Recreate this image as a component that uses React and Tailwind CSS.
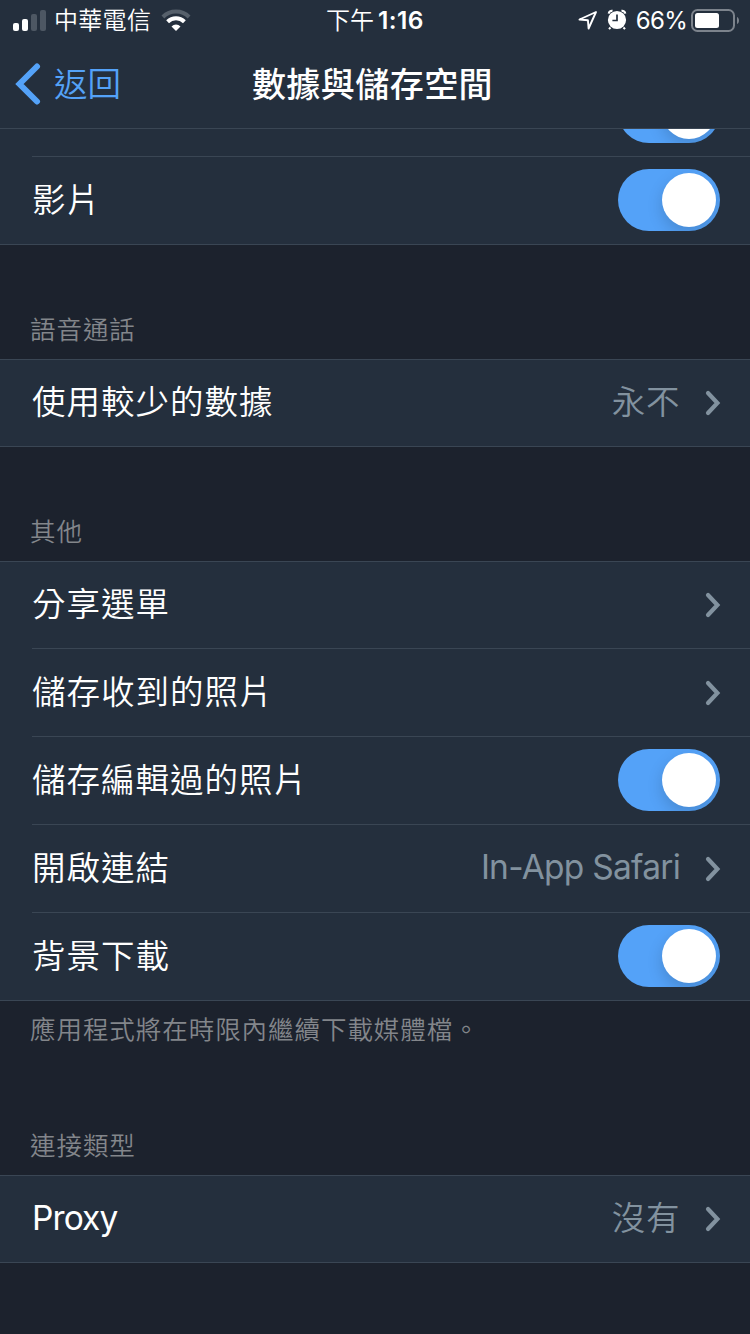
import React from "react";

const latin = "font-['Inter','Noto_Sans_CJK_TC',sans-serif]";

function Chevron() {
  return (
    <svg className="-mr-px ml-[25px] h-[26px] w-4 shrink-0" viewBox="0 0 16 26" fill="none" stroke="#82929f" strokeWidth="4.2" strokeLinecap="round" strokeLinejoin="miter">
      <path d="M3 3 L12.4 13 L3 23" />
    </svg>
  );
}

function Toggle({ className = "" }) {
  return (
    <div className={`flex h-[62px] w-[102px] shrink-0 justify-end overflow-hidden rounded-full bg-[#54a2f8] p-1 ${className}`}>
      <div className="size-[54px] rounded-full bg-white shadow-[0_6px_16px_rgba(0,0,0,0.16)]" />
    </div>
  );
}

function Row({ label, value, toggle, last, first, labelClass = "", valueClass = "" }) {
  const height = first ? "h-[87px]" : "h-[88px]";
  return (
    <div className={`${height} pl-8`}>
      <div className={`flex h-full items-center border-b border-[#3a4654] pr-[30px] ${last ? "-ml-8 pl-8" : ""}`}>
        <div className={`flex-1 whitespace-nowrap pb-1.5 text-[33.5px] font-[350] leading-[48px] tracking-[1px] text-white ${labelClass}`}>
          {label}
        </div>
        {value && (
          <div className={`whitespace-nowrap pb-1.5 text-[33.5px] font-[350] leading-[48px] tracking-[0.6px] text-[#82929f] ${valueClass}`}>
            {value}
          </div>
        )}
        {toggle ? <Toggle className="-mt-0.5" /> : <Chevron />}
      </div>
    </div>
  );
}

function Group({ children }) {
  return <section className="border-t border-[#3a4654] bg-[#242f3d]">{children}</section>;
}

function Caption({ children, className }) {
  return (
    <div className={`pl-[30px] text-[25.5px] font-[350] leading-[38px] tracking-[0.95px] text-[#83868b] ${className}`}>
      {children}
    </div>
  );
}

function Signal() {
  return (
    <div className="flex h-[21px] items-end gap-[3px]">
      <div className="h-2 w-1.5 rounded-[2px] bg-white" />
      <div className="h-3 w-1.5 rounded-[2px] bg-white" />
      <div className="h-[17px] w-1.5 rounded-[2px] bg-[#4d5763]" />
      <div className="h-[21px] w-1.5 rounded-[2px] bg-[#4d5763]" />
    </div>
  );
}

function Wifi() {
  return (
    <svg className="ml-2.5 h-[22px] w-[30px]" viewBox="0 0 30 22" fill="none">
      <path d="M1.9 8 A18.6 18.6 0 0 1 28.1 8" stroke="#56606b" strokeWidth="4" />
      <path d="M6.6 12.8 A12 12 0 0 1 23.4 12.8" stroke="#fff" strokeWidth="4" />
      <path d="M15 22 L10.5 17.4 A6.4 6.4 0 0 1 19.5 17.4 Z" fill="#fff" />
    </svg>
  );
}

function StatusBar() {
  return (
    <div className="grid h-10 grid-cols-[1fr_auto_1fr] items-center text-white">
      <div className="flex items-center pl-[13px]">
        <Signal />
        <span className="ml-2 pb-0.5 text-[24px] font-[350] leading-9 tracking-[0.3px]">中華電信</span>
        <Wifi />
      </div>
      <div className="flex items-center text-[24px] leading-9">
        <span className="pb-0.5 font-[350]">下午</span>
        <span className={`${latin} ml-1 text-[24.5px] font-semibold tracking-[0.4px]`}>1:16</span>
      </div>
      <div className="flex items-center justify-end pr-2.5">
        <svg className="h-5 w-5" viewBox="0 0 20 20" fill="none" stroke="#fff" strokeWidth="1.9" strokeLinejoin="round">
          <path d="M18 2 L1.5 9.5 L9.9 10.2 L10.6 18.5 Z" />
        </svg>
        <svg className="ml-[9px] h-[22px] w-[20px]" viewBox="0 0 20 22" fill="none">
          <circle cx="10" cy="11" r="9.1" fill="#fff" />
          <path d="M1.8 4.6 A3 3 0 0 1 5.5 1.9 M14.5 1.9 A3 3 0 0 1 18.2 4.6" stroke="#fff" strokeWidth="2.2" />
          <path d="M3.5 18.5 L2 20.2 M16.5 18.5 L18 20.2" stroke="#fff" strokeWidth="2" />
          <path d="M10 5.5 V11.5 H5.4" stroke="#242f3d" strokeWidth="1.7" />
        </svg>
        <span className={`${latin} ml-[9px] pt-px text-[24px] leading-9 tracking-[-0.7px]`}>66%</span>
        <svg className="ml-1 h-[23px] w-[49px]" viewBox="0 0 49 23" fill="none">
          <rect x="1" y="1" width="42" height="21" rx="5.5" stroke="#7c838c" strokeWidth="2" />
          <rect x="4" y="4" width="24" height="15" rx="2.5" fill="#fff" />
          <path d="M46 8 C48.7 9 48.7 14 46 15 Z" fill="#7c838c" />
        </svg>
      </div>
    </div>
  );
}

export default function App() {
  return (
    <div lang="zh-Hant" className="flex h-[1334px] w-[750px] flex-col overflow-hidden bg-[#1c222d] font-['Noto_Sans_CJK_TC',sans-serif]">
      <header className="h-[129px] border-b border-[#3a4654] bg-[#242f3d]">
        <StatusBar />
        <div className="grid h-[88px] grid-cols-[1fr_auto_1fr] items-center">
          <div className="flex items-center pl-[15px] text-[#54a2f8]">
            <svg className="h-[44px] w-[26px]" viewBox="0 0 26 44" fill="none" stroke="currentColor" strokeWidth="6" strokeLinecap="round">
              <path d="M22 4.5 L4.5 22 L22 39.5" />
            </svg>
            <span className="ml-[13px] pb-[5px] text-[33.5px] font-[350] leading-[48px]">返回</span>
          </div>
          <h1 className="mr-[5px] pb-0.5 text-[34px] font-medium leading-[48px] tracking-[0.45px] text-white">數據與儲存空間</h1>
        </div>
      </header>
      <div className="flex h-7 items-end justify-end overflow-hidden bg-[#242f3d] pl-8">
        <div className="flex h-full flex-1 items-end justify-end border-b border-[#3a4654] pb-[13px] pr-[30px]">
          <Toggle />
        </div>
      </div>
      <section className="bg-[#242f3d]">
        <Row label="影片" toggle last />
      </section>

      <Caption className="h-[114px] pt-16">語音通話</Caption>
      <Group>
        <Row label="使用較少的數據" value="永不" first last />
      </Group>

      <Caption className="h-[114px] pt-16">其他</Caption>
      <Group>
        <Row label="分享選單" first />
        <Row label="儲存收到的照片" />
        <Row label="儲存編輯過的照片" toggle />
        <Row label="開啟連結" value="In-App Safari" valueClass="font-['Inter',sans-serif] pb-[3px]! font-normal! tracking-[-0.75px]!" />
        <Row label="背景下載" toggle last />
      </Group>

      <Caption className="h-[115px] pt-2">應用程式將在時限內繼續下載媒體檔。</Caption>
      <Caption className="h-[59px] pt-[9px]">連接類型</Caption>
      <Group>
        <Row label="Proxy" labelClass="font-['Inter',sans-serif] pb-[3px]! font-normal! tracking-[-0.9px]!" value="沒有" first last />
      </Group>
    </div>
  );
}
